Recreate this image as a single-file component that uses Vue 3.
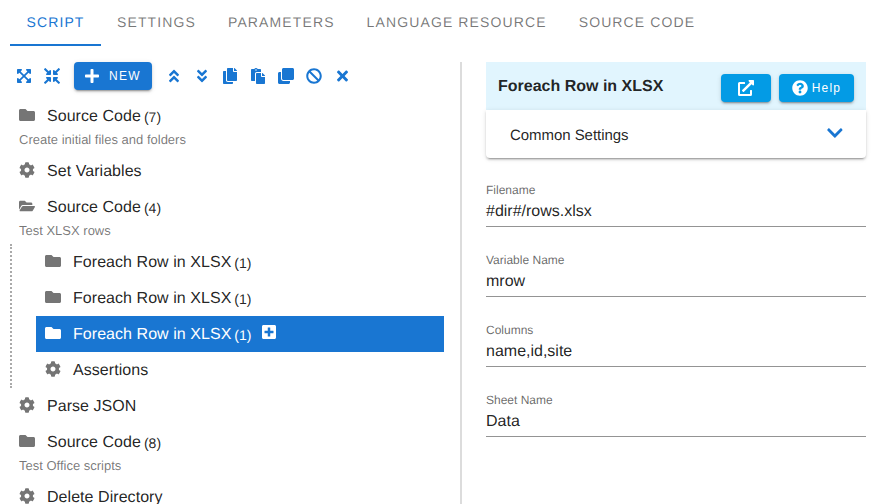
<script setup>
const I = {
  folder: { w: 512, d: 'M464 128H272l-64-64H48C21.49 64 0 85.49 0 112v288c0 26.51 21.49 48 48 48h416c26.51 0 48-21.49 48-48V176c0-26.51-21.49-48-48-48z' },
  open: { w: 576, d: 'M572.694 292.093L500.27 416.248A63.997 63.997 0 0 1 444.989 448H45.025c-18.523 0-30.064-20.093-20.731-36.093l72.424-124.155A64 64 0 0 1 152 256h399.964c18.523 0 30.064 20.093 20.73 36.093zM152 224h328v-48c0-26.51-21.49-48-48-48H272l-64-64H48C21.49 64 0 85.49 0 112v278.046l69.077-118.418C86.214 242.25 117.989 224 152 224z' },
  cog: { w: 512, d: 'M487.4 315.7l-42.6-24.6c4.3-23.2 4.3-47 0-70.2l42.6-24.6c4.9-2.8 7.1-8.6 5.5-14-11.1-35.6-30-67.8-54.7-94.6-3.8-4.1-10-5.1-14.8-2.3L380.8 110c-17.9-15.4-38.5-27.3-60.8-35.1V25.8c0-5.6-3.9-10.5-9.4-11.7-36.7-8.2-74.3-7.8-109.2 0-5.5 1.2-9.4 6.1-9.4 11.7V75c-22.2 7.9-42.8 19.8-60.8 35.1L88.7 85.5c-4.9-2.8-11-1.9-14.8 2.3-24.7 26.7-43.6 58.9-54.7 94.6-1.7 5.4.6 11.2 5.5 14L67.3 221c-4.3 23.2-4.3 47 0 70.2l-42.6 24.6c-4.9 2.8-7.1 8.6-5.5 14 11.1 35.6 30 67.8 54.7 94.6 3.8 4.1 10 5.1 14.8 2.3l42.6-24.6c17.9 15.4 38.5 27.3 60.8 35.1v49.2c0 5.6 3.9 10.5 9.4 11.7 36.7 8.2 74.3 7.8 109.2 0 5.5-1.2 9.4-6.1 9.4-11.7v-49.2c22.2-7.9 42.8-19.8 60.8-35.1l42.6 24.6c4.9 2.8 11 1.9 14.8-2.3 24.7-26.7 43.6-58.9 54.7-94.6 1.5-5.5-.7-11.3-5.6-14.1zM256 336c-44.1 0-80-35.9-80-80s35.9-80 80-80 80 35.9 80 80-35.9 80-80 80z' },
  expand: { w: 448, d: 'M448 344v112a23.94 23.94 0 0 1-24 24H312c-21.39 0-32.09-25.9-17-41l36.2-36.2L224 295.6 116.77 402.9 153 439c15.09 15.1 4.39 41-17 41H24a23.94 23.94 0 0 1-24-24V344c0-21.4 25.89-32.1 41-17l36.19 36.2L184.46 256 77.18 148.7 41 185c-15.1 15.1-41 4.4-41-17V56a23.94 23.94 0 0 1 24-24h112c21.39 0 32.09 25.9 17 41l-36.2 36.2L224 216.4l107.23-107.3L295 73c-15.09-15.1-4.39-41 17-41h112a23.94 23.94 0 0 1 24 24v112c0 21.4-25.89 32.1-41 17l-36.19-36.2L263.54 256l107.28 107.3L407 327.1c15.1-15.2 41-4.5 41 16.9z' },
  compress: { w: 512, d: 'M200 288H88c-21.4 0-32.1 25.8-17 41l32.9 31-99.2 99.3c-6.2 6.2-6.2 16.4 0 22.6l25.4 25.4c6.2 6.2 16.4 6.2 22.6 0L152 408l31.1 33c15.1 15.1 40.9 4.4 40.9-17V312c0-13.3-10.7-24-24-24zm112-64h112c21.4 0 32.1-25.9 17-41l-33-31 99.3-99.3c6.2-6.2 6.2-16.4 0-22.6L481.9 4.7c-6.2-6.2-16.4-6.2-22.6 0L360 104l-31.1-33C313.8 55.9 288 66.6 288 88v112c0 13.3 10.7 24 24 24zm96 136l33-31.1c15.1-15.1 4.4-40.9-17-40.9H312c-13.3 0-24 10.7-24 24v112c0 21.4 25.9 32.1 41 17l31-32.9 99.3 99.3c6.2 6.2 16.4 6.2 22.6 0l25.4-25.4c6.2-6.2 6.2-16.4 0-22.6L408 360zM183 71.1L152 104 52.7 4.7c-6.2-6.2-16.4-6.2-22.6 0L4.7 30.1c-6.2 6.2-6.2 16.4 0 22.6L104 152l-33 31.1C55.9 198.2 66.6 224 88 224h112c13.3 0 24-10.7 24-24V88c0-21.3-25.9-32-41-16.9z' },
  up: { w: 320, d: 'M177 255.7l136 136c9.4 9.4 9.4 24.6 0 33.9l-22.6 22.6c-9.4 9.4-24.6 9.4-33.9 0L160 351.9l-96.4 96.4c-9.4 9.4-24.6 9.4-33.9 0L7 425.7c-9.4-9.4-9.4-24.6 0-33.9l136-136c9.4-9.5 24.6-9.5 34-.1zm-34-192L7 199.7c-9.4 9.4-9.4 24.6 0 33.9l22.6 22.6c9.4 9.4 24.6 9.4 33.9 0l96.4-96.4 96.4 96.4c9.4 9.4 24.6 9.4 33.9 0l22.6-22.6c9.4-9.4 9.4-24.6 0-33.9l-136-136c-9.2-9.4-24.4-9.4-33.8 0z' },
  down: { w: 320, d: 'M143 256.3L7 120.3c-9.4-9.4-9.4-24.6 0-33.9l22.6-22.6c9.4-9.4 24.6-9.4 33.9 0l96.4 96.4 96.4-96.4c9.4-9.4 24.6-9.4 33.9 0L313 86.3c9.4 9.4 9.4 24.6 0 33.9l-136 136c-9.4 9.5-24.6 9.5-34 .1zm34 192l136-136c9.4-9.4 9.4-24.6 0-33.9l-22.6-22.6c-9.4-9.4-24.6-9.4-33.9 0L160 352.1l-96.4-96.4c-9.4-9.4-24.6-9.4-33.9 0L7 278.3c-9.4 9.4-9.4 24.6 0 33.9l136 136c9.4 9.5 24.6 9.5 34 .1z' },
  copy: { w: 448, d: 'M320 448v40c0 13.255-10.745 24-24 24H24c-13.255 0-24-10.745-24-24V120c0-13.255 10.745-24 24-24h72v296c0 30.879 25.121 56 56 56h168zm0-344V0H152c-13.255 0-24 10.745-24 24v368c0 13.255 10.745 24 24 24h272c13.255 0 24-10.745 24-24V128H344c-13.2 0-24-10.8-24-24zm120.971-31.029L375.029 7.029A24 24 0 0 0 358.059 0H352v96h96v-6.059a24 24 0 0 0-7.029-16.97z' },
  paste: { w: 448, d: 'M128 184c0-30.879 25.122-56 56-56h136V56c0-13.255-10.745-24-24-24h-80.61C204.306 12.89 183.637 0 160 0s-44.306 12.89-55.39 32H24C10.745 32 0 42.745 0 56v336c0 13.255 10.745 24 24 24h104V184zm32-144c13.255 0 24 10.745 24 24s-10.745 24-24 24-24-10.745-24-24 10.745-24 24-24zm184 248h104v200c0 13.255-10.745 24-24 24H184c-13.255 0-24-10.745-24-24V184c0-13.255 10.745-24 24-24h136v104c0 13.2 10.8 24 24 24zm104-38.059V256h-96v-96h6.059a24 24 0 0 1 16.97 7.029l65.941 65.941a24.002 24.002 0 0 1 7.03 16.971z' },
  clone: { w: 512, d: 'M464 0c26.51 0 48 21.49 48 48v288c0 26.51-21.49 48-48 48H176c-26.51 0-48-21.49-48-48V48c0-26.51 21.49-48 48-48h288M176 416c-44.112 0-80-35.888-80-80V128H48c-26.51 0-48 21.49-48 48v288c0 26.51 21.49 48 48 48h288c26.51 0 48-21.49 48-48v-48H176z' },
  ban: { w: 512, d: 'M256 8C119.034 8 8 119.033 8 256s111.034 248 248 248 248-111.034 248-248S392.967 8 256 8zm130.108 117.892c65.448 65.448 70 165.481 20.677 235.637L150.47 105.216c70.204-49.356 170.226-44.735 235.638 20.676zM125.892 386.108c-65.448-65.448-70-165.481-20.677-235.637L361.53 406.784c-70.203 49.356-170.226 44.736-235.638-20.676z' },
  times: { w: 352, d: 'M242.72 256l100.07-100.07c12.28-12.28 12.28-32.19 0-44.48l-22.24-22.24c-12.28-12.28-32.19-12.28-44.48 0L176 189.28 75.93 89.21c-12.28-12.28-32.19-12.28-44.48 0L9.21 111.45c-12.28 12.28-12.28 32.19 0 44.48L109.28 256 9.21 356.07c-12.28 12.28-12.28 32.19 0 44.48l22.24 22.24c12.28 12.28 32.2 12.28 44.48 0L176 322.72l100.07 100.07c12.28 12.28 32.2 12.28 44.48 0l22.24-22.24c12.28-12.28 12.28-32.19 0-44.48L242.72 256z' },
  plus: { w: 448, d: 'M416 208H272V64c0-17.67-14.33-32-32-32h-32c-17.67 0-32 14.33-32 32v144H32c-17.67 0-32 14.33-32 32v32c0 17.67 14.33 32 32 32h144v144c0 17.67 14.33 32 32 32h32c17.67 0 32-14.33 32-32V304h144c17.67 0 32-14.33 32-32v-32c0-17.67-14.33-32-32-32z' },
  plusSquare: { w: 448, d: 'M400 32H48C21.5 32 0 53.5 0 80v352c0 26.5 21.5 48 48 48h352c26.5 0 48-21.5 48-48V80c0-26.5-21.5-48-48-48zm-32 252c0 6.6-5.4 12-12 12h-92v92c0 6.6-5.4 12-12 12h-56c-6.6 0-12-5.4-12-12v-92H92c-6.6 0-12-5.4-12-12v-56c0-6.6 5.4-12 12-12h92v-92c0-6.6 5.4-12 12-12h56c6.6 0 12 5.4 12 12v92h92c6.6 0 12 5.4 12 12v56z' },
  ext: { w: 512, d: 'M432 320H400a16 16 0 0 0-16 16V448H64V128H208a16 16 0 0 0 16-16V80a16 16 0 0 0-16-16H48A48 48 0 0 0 0 112V464a48 48 0 0 0 48 48H400a48 48 0 0 0 48-48V336A16 16 0 0 0 432 320ZM488 0h-128c-21.37 0-32.05 25.91-17 41l35.73 35.73L135 320.37a24 24 0 0 0 0 34L157.67 377a24 24 0 0 0 34 0L435.28 133.32 471 169c15 15 41 4.5 41-17V24A24 24 0 0 0 488 0Z' },
  help: { w: 512, d: 'M504 256c0 136.997-111.043 248-248 248S8 392.997 8 256C8 119.083 119.043 8 256 8s248 111.083 248 248zM262.655 90c-54.497 0-89.255 22.957-116.549 63.758-3.536 5.286-2.353 12.415 2.715 16.258l34.699 26.31c5.205 3.947 12.621 3.008 16.665-2.122 17.864-22.658 30.113-35.797 57.303-35.797 20.429 0 45.698 13.148 45.698 32.958 0 14.976-12.363 22.667-32.534 33.976C247.128 238.528 216 254.941 216 296v4c0 6.627 5.373 12 12 12h56c6.627 0 12-5.373 12-12v-1.333c0-28.462 83.186-29.647 83.186-106.667 0-58.002-60.165-102-116.531-102zM256 338c-25.365 0-46 20.635-46 46 0 25.364 20.635 46 46 46s46-20.636 46-46c0-25.365-20.635-46-46-46z' },
  chevron: { w: 448, d: 'M207.029 381.476L12.686 187.132c-9.373-9.373-9.373-24.569 0-33.941l22.667-22.667c9.357-9.357 24.522-9.375 33.901-.04L224 284.505l154.745-154.021c9.379-9.335 24.544-9.317 33.901.04l22.667 22.667c9.373 9.373 9.373 24.569 0 33.941L240.971 381.476c-9.373 9.372-24.569 9.372-33.942 0z' }
}
const tabs = ['Script', 'Settings', 'Parameters', 'Language Resource', 'Source Code']
const toolA = ['expand', 'compress']
const toolB = ['up', 'down', 'copy', 'paste', 'clone', 'ban', 'times']
const before = [
  { icon: 'folder', name: 'Source Code', count: 7, sub: 'Create initial files and folders' },
  { icon: 'cog', name: 'Set Variables' },
  { icon: 'open', name: 'Source Code', count: 4, sub: 'Test XLSX rows' }
]
const children = [
  { icon: 'folder', name: 'Foreach Row in XLSX', count: 1 },
  { icon: 'folder', name: 'Foreach Row in XLSX', count: 1 },
  { icon: 'folder', name: 'Foreach Row in XLSX', count: 1, active: true },
  { icon: 'cog', name: 'Assertions' }
]
const after = [
  { icon: 'cog', name: 'Parse JSON' },
  { icon: 'folder', name: 'Source Code', count: 8, sub: 'Test Office scripts' },
  { icon: 'cog', name: 'Delete Directory' }
]
const fields = [
  { label: 'Filename', value: '#dir#/rows.xlsx' },
  { label: 'Variable Name', value: 'mrow' },
  { label: 'Columns', value: 'name,id,site' },
  { label: 'Sheet Name', value: 'Data' }
]
</script>

<template>
  <div class="app">
    <nav class="tabs">
      <div v-for="(t, i) in tabs" :key="t" class="tab" :class="{ on: i === 0 }">{{ t }}</div>
    </nav>
    <main class="main">
      <section class="left">
        <div class="toolbar">
          <span v-for="k in toolA" :key="k" class="tool">
            <svg class="ic" :viewBox="`0 0 ${I[k].w} 512`"><path :d="I[k].d" /></svg>
          </span>
          <button class="new">
            <svg class="ic plus" viewBox="0 0 448 512"><path :d="I.plus.d" /></svg>
            <span>New</span>
          </button>
          <span v-for="k in toolB" :key="k" class="tool">
            <svg class="ic" :viewBox="`0 0 ${I[k].w} 512`"><path :d="I[k].d" /></svg>
          </span>
        </div>
        <div class="tree">
          <template v-for="(n, i) in before" :key="i">
            <div class="row">
              <svg class="node" :viewBox="`0 0 ${I[n.icon].w} 512`"><path :d="I[n.icon].d" /></svg>
              <span class="name">{{ n.name }}</span>
              <span v-if="n.count" class="count">({{ n.count }})</span>
            </div>
            <div v-if="n.sub" class="sub">{{ n.sub }}</div>
          </template>
          <div class="kids">
            <div v-for="(n, i) in children" :key="i" class="row" :class="{ active: n.active }">
              <svg class="node" :viewBox="`0 0 ${I[n.icon].w} 512`"><path :d="I[n.icon].d" /></svg>
              <span class="name">{{ n.name }}</span>
              <span v-if="n.count" class="count">({{ n.count }})</span>
              <svg v-if="n.active" class="add" viewBox="0 0 448 512"><path :d="I.plusSquare.d" /></svg>
            </div>
          </div>
          <template v-for="(n, i) in after" :key="i">
            <div class="row">
              <svg class="node" :viewBox="`0 0 ${I[n.icon].w} 512`"><path :d="I[n.icon].d" /></svg>
              <span class="name">{{ n.name }}</span>
              <span v-if="n.count" class="count">({{ n.count }})</span>
            </div>
            <div v-if="n.sub" class="sub">{{ n.sub }}</div>
          </template>
        </div>
      </section>
      <div class="divider"></div>
      <section class="right">
        <header class="head">
          <h1>Foreach Row in XLSX</h1>
          <button class="hbtn ext">
            <svg class="hic" viewBox="0 0 512 512"><path :d="I.ext.d" /></svg>
          </button>
          <button class="hbtn help">
            <svg class="hic q" viewBox="0 0 512 512"><path :d="I.help.d" /></svg>
            <span>Help</span>
          </button>
        </header>
        <div class="panel">
          <span>Common Settings</span>
          <svg class="chev" viewBox="0 0 448 512"><path :d="I.chevron.d" /></svg>
        </div>
        <div class="fields">
          <div v-for="f in fields" :key="f.label" class="field">
            <label>{{ f.label }}</label>
            <div class="val">{{ f.value }}</div>
          </div>
        </div>
      </section>
    </main>
  </div>
</template>

<style>
html, body { margin: 0; overflow: hidden; background: #fff; }
</style>

<style scoped>
.app {
  width: 875px;
  height: 504px;
  overflow: hidden;
  font-family: "Liberation Sans", Arial, sans-serif;
  color: rgba(0, 0, 0, .87);
  background: #fff;
  text-rendering: geometricPrecision;
}
svg { display: block; fill: currentColor; }

.tabs { display: flex; height: 46px; padding-left: 10px; box-sizing: border-box; }
.tab {
  padding: 0 16px;
  min-width: 91px;
  box-sizing: border-box;
  height: 46px;
  line-height: 45px;
  font-size: 14px;
  font-weight: 400;
  letter-spacing: 1.12px;
  text-transform: uppercase;
  text-align: center;
  color: rgba(0, 0, 0, .54);
}
.tab.on { color: #1976d2; border-bottom: 2px solid #1976d2; }

.main { display: flex; padding-top: 16px; height: 442px; }
.left { width: 460px; padding-left: 10px; box-sizing: border-box; flex: none; }
.divider { width: 2px; flex: none; background: #dcdcdc; margin-right: 24px; }
.right { width: 380px; flex: none; }

.toolbar { display: flex; align-items: center; height: 28px; margin-bottom: 7px; color: #1976d2; }
.tool { width: 28px; height: 28px; display: flex; align-items: center; justify-content: center; }
.ic { height: 16px; }
.new {
  display: flex;
  align-items: center;
  justify-content: center;
  gap: 10px;
  width: 78px;
  height: 28px;
  margin: 0 8px;
  padding: 0;
  border: 0;
  border-radius: 4px;
  background: #1976d2;
  color: #fff;
  font: 400 12px "Liberation Sans", Arial, sans-serif;
  letter-spacing: 1.3px;
  text-transform: uppercase;
  box-shadow: 0 3px 1px -2px rgba(0,0,0,.2), 0 2px 2px 0 rgba(0,0,0,.14), 0 1px 5px 0 rgba(0,0,0,.12);
}
.plus { height: 16px; }

.tree { width: 434px; padding-top: 1px; }
.row { display: flex; align-items: center; height: 36px; padding-left: 9px; box-sizing: border-box; }
.node { height: 16px; width: 16px; color: #757575; flex: none; margin-right: 12px; margin-top: -2px; }
.name { font-size: 16px; padding-top: 1px; letter-spacing: .05px; }
.count { font-size: 14px; margin-left: 3px; margin-top: 1px; }
.sub { height: 19px; margin-top: -1px; margin-bottom: 1px; line-height: 13px; padding-left: 9px; font-size: 13px; color: rgba(0, 0, 0, .54); box-sizing: border-box; }
.kids { border-left: 2px dotted #aaa; padding-left: 24px; }
.row.active { background: #1976d2; color: #fff; }
.row.active .node { color: #fff; }
.add { height: 16px; margin-left: 11px; margin-top: -5px; }

.head { display: flex; align-items: center; height: 48px; background: #e1f5fe; padding: 0 12px; box-sizing: border-box; }
h1 { flex: 1; margin: 1px 0 0; font-size: 16px; font-weight: 700; }
.hbtn {
  display: flex;
  align-items: center;
  justify-content: center;
  height: 28px;
  margin-top: 4px;
  padding: 0;
  border: 0;
  border-radius: 4px;
  background: #039be5;
  color: #fff;
  font: 400 12px "Liberation Sans", Arial, sans-serif;
  letter-spacing: 1.2px;
  box-shadow: 0 3px 1px -2px rgba(0,0,0,.2), 0 2px 2px 0 rgba(0,0,0,.14), 0 1px 5px 0 rgba(0,0,0,.12);
}
.ext { width: 50px; margin-right: 8px; }
.help { width: 75px; gap: 4px; }
.hic { height: 16px; width: 16px; }
.panel {
  display: flex;
  align-items: center;
  justify-content: space-between;
  height: 48px;
  padding: 0 23px 0 24px;
  font-size: 15px;
  letter-spacing: -.05px;
  border-radius: 0 0 4px 4px;
  box-shadow: 0 3px 1px -2px rgba(0,0,0,.2), 0 2px 2px 0 rgba(0,0,0,.14), 0 1px 5px 0 rgba(0,0,0,.12);
}
.panel span { padding-top: 2px; }
.chev { height: 18px; color: #1976d2; margin-top: -3px; }
.fields { padding-top: 24px; }
.field { height: 70px; box-sizing: border-box; }
.field label { display: block; font-size: 12px; line-height: 16px; color: rgba(0, 0, 0, .6); }
.val { height: 29px; padding-top: 2px; line-height: 24px; font-size: 16px; border-bottom: 1px solid rgba(0, 0, 0, .42); box-sizing: border-box; }
</style>
